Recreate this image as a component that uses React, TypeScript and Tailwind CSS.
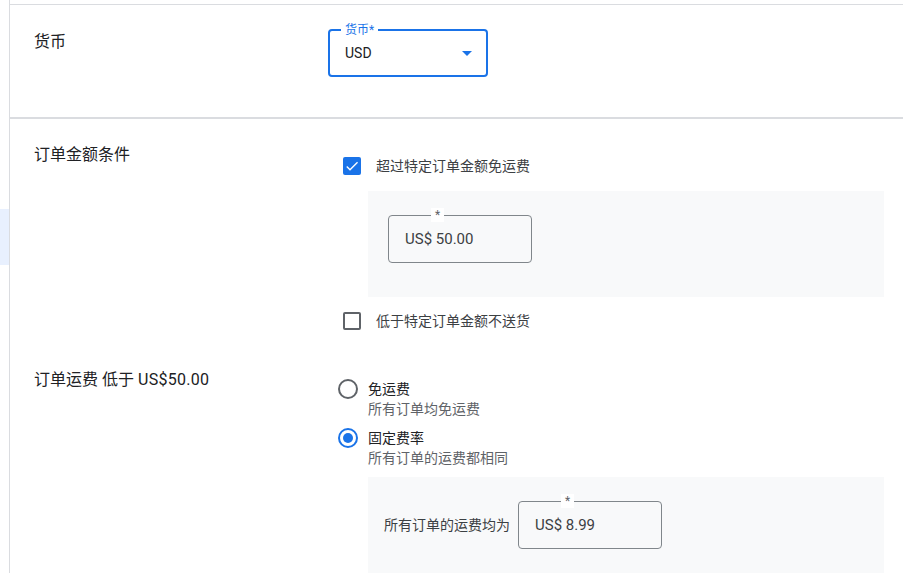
import React from "react";

const font = { fontFamily: 'Roboto, "Noto Sans CJK SC", sans-serif' };

function Checkbox({ checked, label }: { checked: boolean; label: string }) {
  return (
    <div className="flex h-[22px] items-center pl-[15px]">
      {checked ? (
        <div className="flex h-[18px] w-[18px] items-center justify-center rounded-[2px] bg-[#1a73e8]">
          <svg width="16" height="16" viewBox="0 0 24 24">
            <path d="M9 16.17L4.83 12l-1.42 1.41L9 19 21 7l-1.41-1.41z" fill="#fff" />
          </svg>
        </div>
      ) : (
        <div className="h-[18px] w-[18px] rounded-[2px] border-2 border-[#5f6368]" />
      )}
      <span className="ml-[15px] text-[14px] leading-[20px] text-[#3c4043]">{label}</span>
    </div>
  );
}

function Radio({ checked, title, sub }: { checked: boolean; title: string; sub: string }) {
  return (
    <div className="flex items-start pl-[10px]">
      <div
        className={`flex h-[20px] w-[20px] items-center justify-center rounded-full border-2 ${
          checked ? "border-[#1a73e8]" : "border-[#5f6368]"
        }`}
      >
        {checked && <div className="h-[10px] w-[10px] rounded-full bg-[#1a73e8]" />}
      </div>
      <div className="ml-[10px]">
        <div className="text-[14px] leading-[20px] text-[#202124]">{title}</div>
        <div className="text-[14px] leading-[20px] text-[#5f6368]">{sub}</div>
      </div>
    </div>
  );
}

function MoneyInput({ value }: { value: string }) {
  return (
    <div className="relative flex h-[48px] w-[144px] items-center rounded-[4px] border border-[#80868b] pl-[16px]">
      <span className="absolute left-[42px] top-[-8px] bg-white px-[4px] text-[12px] leading-[14px] text-[#5f6368]">
        *
      </span>
      <span className="text-[15px] text-[#3c4043]">{value}</span>
    </div>
  );
}

export default function App() {
  return (
    <div className="flex h-[573px] w-[903px] overflow-hidden bg-white" style={font}>
      {/* left nav remnant */}
      <div className="w-[9px] shrink-0 pt-[209px]">
        <div className="h-[56px] bg-[#e8f0fe]" />
      </div>

      <div className="flex-1 border-l border-[#dadce0] pt-[4px]">
        {/* currency */}
        <div className="flex border-y border-b-2 border-[#dadce0] pb-[40px] pl-[24px] pt-[24px]">
          <div className="mt-[1px] w-[294px] text-[16px] leading-[24px] text-[#202124]">货币</div>
          <div className="relative flex h-[48px] w-[160px] items-center justify-between rounded-[4px] border-2 border-[#1a73e8] pl-[15px] pr-[14px]">
            <span className="absolute left-[11px] top-[-9px] bg-white px-[4px] text-[12px] leading-[16px] text-[#1a73e8]">
              货币*
            </span>
            <span className="text-[14px] text-[#202124]">USD</span>
            <svg width="10" height="5" viewBox="0 0 10 5">
              <polygon points="0,0 10,0 5,5" fill="#1a73e8" />
            </svg>
          </div>
        </div>

        {/* order amount conditions */}
        <div className="pl-[24px] pt-[24px]">
          <div className="flex items-start">
            <div className="w-[294px] text-[16px] leading-[24px] text-[#202124]">订单金额条件</div>
            <div className="w-[556px] pt-[12px]">
              <Checkbox checked label="超过特定订单金额免运费" />
              <div className="ml-[40px] mt-[14px] bg-[#f8f9fa] pb-[34px] pl-[20px] pt-[24px]">
                <MoneyInput value="US$ 50.00" />
              </div>
              <div className="mt-[13px]">
                <Checkbox checked={false} label="低于特定订单金额不送货" />
              </div>
            </div>
          </div>

          <div className="mt-[36px] flex items-start">
            <div className="w-[294px] text-[16px] leading-[24px] text-[#202124]">
              订单运费 低于 <span className="tracking-[0.3px]">US$50.00</span>
            </div>
            <div className="w-[556px] pt-[11px]">
              <Radio checked={false} title="免运费" sub="所有订单均免运费" />
              <div className="mt-[9px]">
                <Radio checked title="固定费率" sub="所有订单的运费都相同" />
              </div>
              <div className="ml-[40px] mt-[9px] flex items-center bg-[#f8f9fa] pb-[24px] pl-[16px] pt-[24px]">
                <span className="mr-[8px] text-[14px] leading-[20px] text-[#3c4043]">所有订单的运费均为</span>
                <MoneyInput value="US$ 8.99" />
              </div>
            </div>
          </div>
        </div>
      </div>
    </div>
  );
}
